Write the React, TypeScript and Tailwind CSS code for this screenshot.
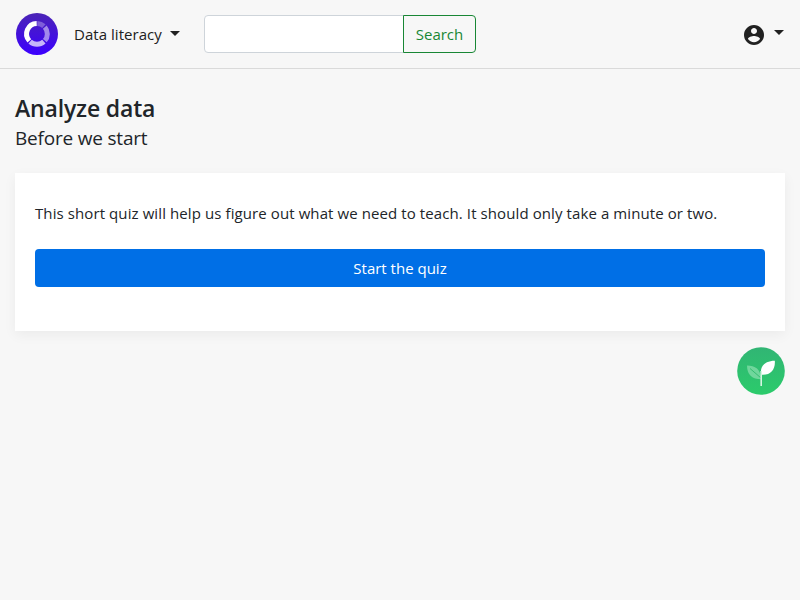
function Caret() {
  return <span className="inline-block border-x-[5px] border-t-[5px] border-x-transparent border-t-[#212121]" />;
}

function Logo() {
  return (
    <svg className="size-[42px]" viewBox="0 0 42 42" fill="none">
      <defs>
        <linearGradient id="logo-fill" x1="0" y1="0" x2="0" y2="1">
          <stop offset="0" stopColor="#4b24b5" />
          <stop offset="1" stopColor="#3c00ff" />
        </linearGradient>
      </defs>
      <circle cx="21" cy="21" r="21" fill="url(#logo-fill)" />
      <g stroke="#fff" strokeWidth="5">
        <path d="M20.7 10.5A10.4 10.4 0 0 0 13.3 27.9" />
        <path d="M21.3 10.5A10.4 10.4 0 0 1 27.9 13.2" opacity="0.3" />
        <path d="M28.8 14.1A10.4 10.4 0 0 1 28.8 27.7" opacity="0.5" />
        <path d="M27.9 28.6A10.4 10.4 0 0 1 14.1 28.6" opacity="0.7" />
      </g>
    </svg>
  );
}

function Sprout() {
  return (
    <svg className="size-12" viewBox="0 0 48 48">
      <defs>
        <linearGradient id="sprout-fill" x1="0" y1="0" x2="0" y2="1">
          <stop offset="0" stopColor="#31b574" />
          <stop offset="1" stopColor="#2bcb6b" />
        </linearGradient>
      </defs>
      <circle cx="24" cy="24" r="23.8" fill="url(#sprout-fill)" />
      <path d="M10 18.4C18 18.4 24 22 24 32.3C15.5 32 10 28 10 18.4Z" fill="#70d69c" />
      <path d="M13 21.5L24 31" stroke="#36bd72" strokeWidth="1" />
      <path d="M37.8 13.8C38.5 22 34 28.5 24.2 27.7C22.5 18.5 29 13.8 37.8 13.8Z" fill="#fff" />
      <path d="M24.2 24V39" stroke="#d5f5e1" strokeWidth="1.6" />
    </svg>
  );
}

export default function App() {
  return (
    <div className="min-h-screen bg-[#f7f7f7] font-['Open_Sans','Noto_Sans',sans-serif] text-[15px] leading-6 text-[#212529]">
      <header className="flex h-[69px] items-center border-b border-[#dadada] px-4">
        <Logo />
        <button className="ml-4 flex items-center gap-2 text-[#212121]">
          <span className="w-[88px] text-left tracking-[0.04px] whitespace-nowrap">Data literacy</span>
          <span className="flex pb-0.5"><Caret /></span>
        </button>
        <form className="ml-6 flex h-[38px]">
          <input aria-label="Search" className="w-[200px] rounded-l border border-[#ced4da] bg-white px-3 outline-none" />
          <button type="button" className="-ml-px w-[73px] rounded-r border border-[#198735] text-[#198735]">
            Search
          </button>
        </form>
        <button aria-label="Account" className="ml-auto flex items-center gap-2">
          <svg className="size-6 translate-y-px" viewBox="0 0 24 24" fill="#212121">
            <path d="M12 2C6.48 2 2 6.48 2 12s4.48 10 10 10 10-4.48 10-10S17.52 2 12 2zm0 3c1.66 0 3 1.34 3 3s-1.34 3-3 3-3-1.34-3-3 1.34-3 3-3zm0 14.2c-2.5 0-4.71-1.28-6-3.22.03-1.99 4-3.08 6-3.08 1.99 0 5.97 1.09 6 3.08-1.29 1.94-3.5 3.22-6 3.22z" />
          </svg>
          <span className="flex pb-1"><Caret /></span>
        </button>
      </header>
      <main className="px-[15px] pt-[25px]">
        <h1 className="text-[23px] leading-[29px] font-semibold tracking-[-0.16px]">Analyze data</h1>
        <h2 className="text-[19px] leading-[30px] tracking-[-0.2px]">Before we start</h2>
        <section className="mt-5 h-[158px] bg-white px-5 pt-7 shadow-[0_4px_12px_rgba(0,0,0,0.05)]">
          <p className="tracking-[0.095px] whitespace-nowrap">
            This short quiz will help us figure out what we need to teach. It should only take a minute or two.
          </p>
          <button className="mt-6 h-[38px] w-full rounded bg-[#006fe6] text-white">Start the quiz</button>
        </section>
        <div className="mt-4 flex justify-end">
          <Sprout />
        </div>
      </main>
    </div>
  );
}
